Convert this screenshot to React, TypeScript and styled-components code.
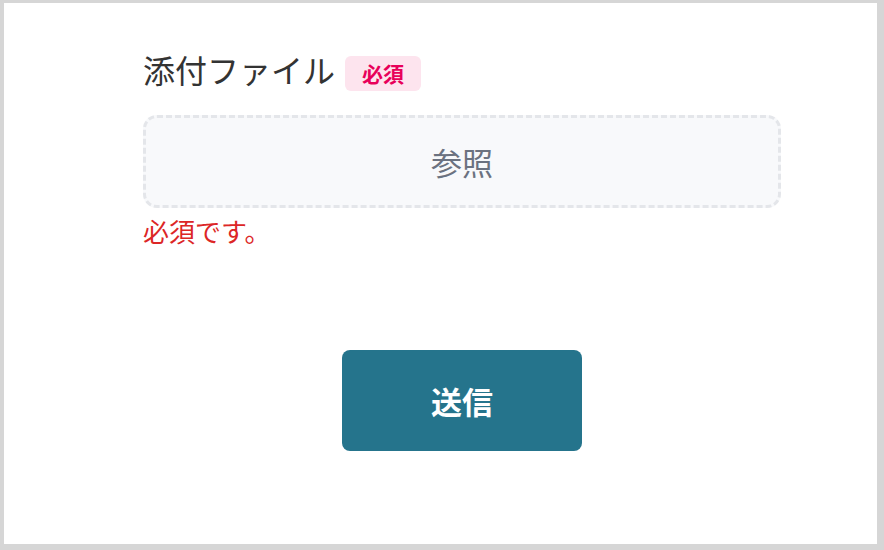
import React from "react";
import styled, { createGlobalStyle } from "styled-components";

const Global = createGlobalStyle`
  html, body { margin: 0; padding: 0; background: #d6d6d6; }
  body { font-family: "Noto Sans CJK JP", "Noto Sans", sans-serif; }
`;

const Frame = styled.div`
  box-sizing: border-box;
  width: 884px;
  height: 550px;
  padding: 3px 7px 6px 4px;
`;

const Page = styled.div`
  background: #ffffff;
  height: 100%;
  box-sizing: border-box;
  padding: 44px 0 0 139px;
`;

const Form = styled.div`
  width: 638px;
  display: flex;
  flex-direction: column;
`;

const LabelRow = styled.div`
  display: flex;
  align-items: center;
  gap: 10px;
  height: 44px;
`;

const Label = styled.span`
  font-size: 32px;
  color: #333333;
  line-height: 44px;
`;

const Badge = styled.span`
  display: inline-flex;
  align-items: center;
  justify-content: center;
  margin-top: 8px;
  background: #fde4ee;
  color: #e8005a;
  font-weight: 700;
  font-size: 21px;
  height: 35px;
  padding: 0 17px;
  border-radius: 6px;
`;

const Drop = styled.button`
  margin-top: 24px;
  height: 93px;
  box-sizing: border-box;
  border: 3px dashed #e4e6ea;
  border-radius: 14px;
  background: #f8f9fb;
  color: #6b7280;
  font-family: inherit;
  font-size: 31px;
  cursor: pointer;
`;

const Error = styled.div`
  margin-top: 5px;
  color: #dc2626;
  font-size: 26px;
  line-height: 36px;
`;

const Submit = styled.button`
  align-self: center;
  margin-top: 101px;
  width: 240px;
  height: 101px;
  border: none;
  border-radius: 8px;
  background: #25748c;
  color: #ffffff;
  font-family: inherit;
  font-weight: 700;
  font-size: 31px;
`;

export default function App() {
  return (
    <>
      <Global />
      <Frame>
        <Page>
          <Form>
            <LabelRow>
              <Label>添付ファイル</Label>
              <Badge>必須</Badge>
            </LabelRow>
            <Drop>参照</Drop>
            <Error>必須です。</Error>
            <Submit>送信</Submit>
          </Form>
        </Page>
      </Frame>
    </>
  );
}
